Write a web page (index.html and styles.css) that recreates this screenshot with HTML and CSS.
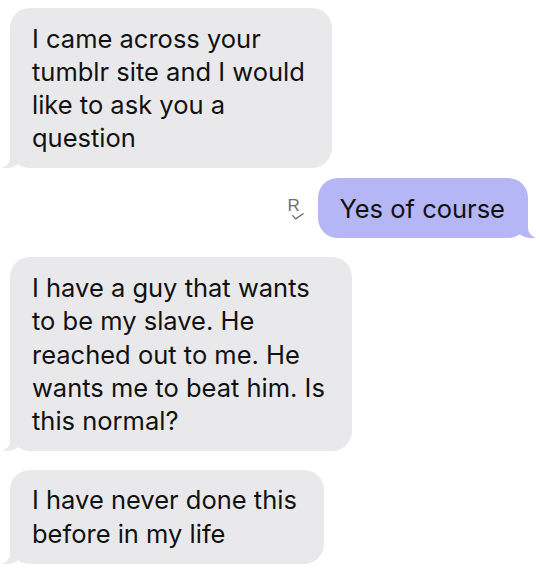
FILE: index.html
```html
<!DOCTYPE html>
<html>
<head>
<meta charset="utf-8">
<link rel="stylesheet" href="styles.css">
</head>
<body>
<div class="chat">
  <div class="row row-in">
    <div class="bubble in">I came across your<br>tumblr site and I would<br>like to ask you a<br>question</div>
  </div>
  <div class="row row-out">
    <div class="receipt">
      <span class="receipt-r">R</span>
      <svg class="receipt-check" width="12" height="7" viewBox="0 0 12 7"><polyline points="0.8,2.6 3.6,5.9 11.2,0.8" fill="none" stroke="#6a6a6e" stroke-width="1.3" stroke-linecap="round" stroke-linejoin="round"/></svg>
    </div>
    <div class="bubble out">Yes of course</div>
  </div>
  <div class="row row-in gap-big">
    <div class="bubble in">I have a guy that wants<br>to be my slave. He<br>reached out to me. He<br>wants me to beat him. Is<br>this normal?</div>
  </div>
  <div class="row row-in gap-big">
    <div class="bubble in">I have never done this<br>before in my life</div>
  </div>
</div>
</body>
</html>
```
FILE: styles.css
```css
html, body {
  margin: 0;
  padding: 0;
  background: #ffffff;
}
.chat {
  display: flex;
  flex-direction: column;
  padding: 8px 12px 0 10px;
  font-family: Inter, "Liberation Sans", Arial, sans-serif;
  font-size: 25.5px;
  line-height: 33.3px;
  color: #111111;
}
.row {
  display: flex;
  align-items: center;
  margin-top: 10px;
}
.row:first-child {
  margin-top: 0;
}
.gap-big {
  margin-top: 19px;
}
.row-in {
  justify-content: flex-start;
}
.row-out {
  justify-content: flex-end;
  gap: 14px;
}
.bubble {
  position: relative;
  border-radius: 20px;
  padding: 13.5px 27px 13.5px 22px;
  white-space: nowrap;
}
.in {
  background: #e9e9eb;
}
.out {
  background: #b4b6f6;
  padding: 13.5px 23px 13.5px 21px;
}
.bubble::before,
.bubble::after {
  content: "";
  position: absolute;
  bottom: 0;
  height: 20px;
}
.in::before {
  left: -7px;
  width: 20px;
  background: #e9e9eb;
  border-bottom-right-radius: 16px 14px;
}
.in::after {
  left: -26px;
  width: 26px;
  background: #ffffff;
  border-bottom-right-radius: 10px;
}
.out::before {
  right: -7px;
  width: 20px;
  background: #b4b6f6;
  border-bottom-left-radius: 16px 14px;
}
.out::after {
  right: -26px;
  width: 26px;
  background: #ffffff;
  border-bottom-left-radius: 10px;
}
.receipt {
  display: flex;
  flex-direction: column;
  align-items: flex-start;
  width: 17px;
  margin-top: 3px;
}
.receipt-r {
  font-family: "Liberation Sans", Arial, sans-serif;
  font-size: 17px;
  line-height: 13px;
  color: #707074;
}
.receipt-check {
  display: block;
  margin-left: 5px;
  margin-top: 1px;
}
```
